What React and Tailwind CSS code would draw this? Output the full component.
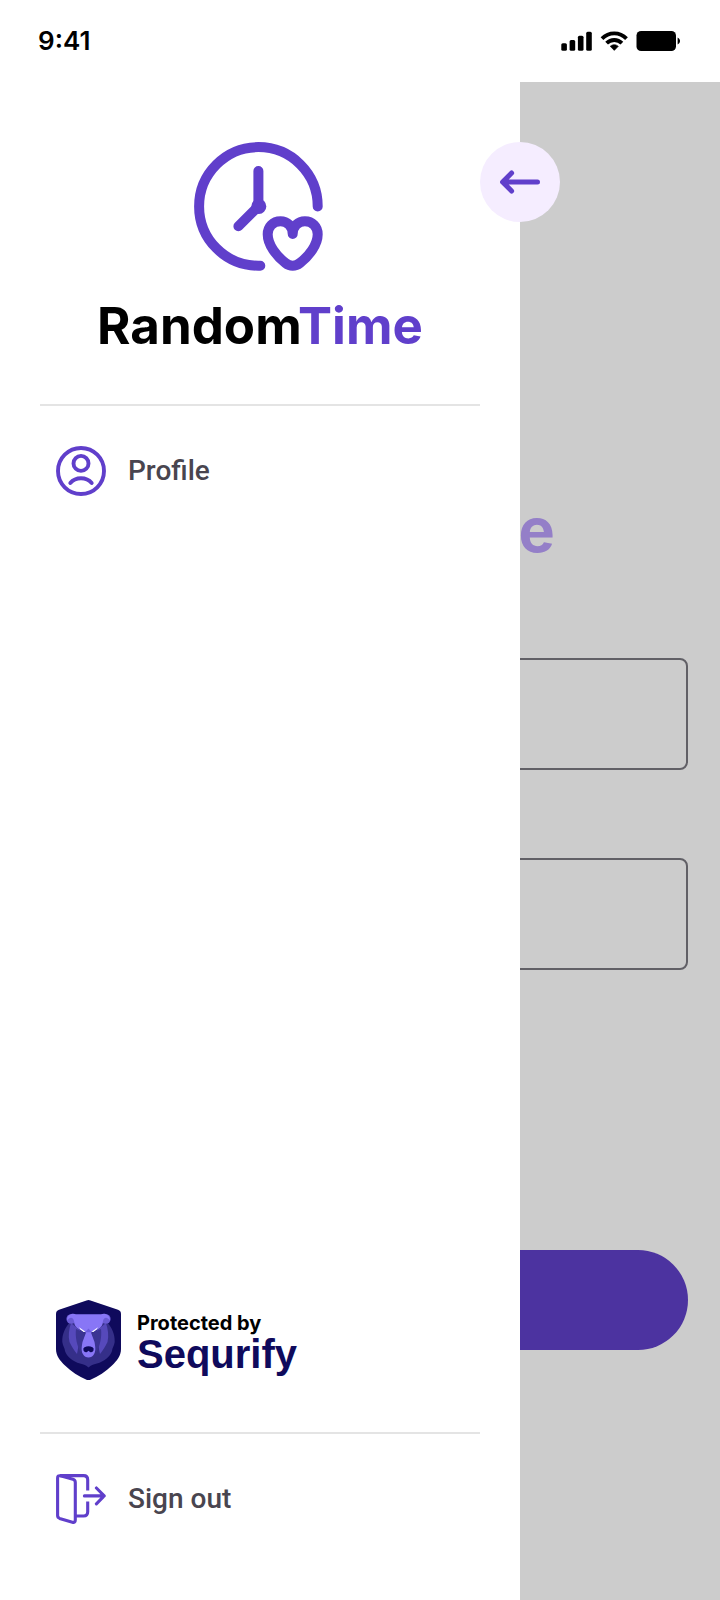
function StatusIcons() {
  return (
    <div className="flex items-center gap-2">
      <svg className="h-5 w-8" viewBox="0 0 32 20" fill="currentColor" aria-hidden="true">
        <rect x="1.3" y="12.3" width="5.6" height="7.4" rx="1.5" />
        <rect x="9.6" y="9" width="5.6" height="10.7" rx="1.5" />
        <rect x="17.9" y="4.8" width="5.6" height="14.9" rx="1.5" />
        <rect x="26.2" y="0.8" width="5.6" height="18.9" rx="1.5" />
      </svg>
      <svg className="h-5 w-7" viewBox="0 0 28 20" aria-hidden="true">
        <g fill="none" stroke="currentColor" strokeWidth="3.8">
          <path d="M2 7.6 C8.8 0.5 19.7 0.5 26.5 7.6" />
          <path d="M6.6 12.2 C10.8 7.9 17.7 7.9 21.9 12.2" />
        </g>
        <path
          d="M14.3 19.4 L10.2 15.3 C12.5 13.2 16 13.2 18.3 15.3 Z"
          fill="currentColor"
          stroke="currentColor"
          strokeWidth="0.6"
        />
      </svg>
      <svg className="h-5 w-11" viewBox="0 0 44 20" fill="currentColor" aria-hidden="true">
        <rect x="0.5" y="0" width="39.5" height="20" rx="4.6" />
        <path d="M41.6 6.5 C44.8 8 44.8 12 41.6 13.5 Z" />
      </svg>
    </div>
  );
}

function ClockHeartLogo() {
  return (
    <svg
      className="mr-1 size-[129px]"
      viewBox="0 0 129 129"
      fill="none"
      stroke="currentColor"
      strokeWidth="10"
      strokeLinecap="round"
      strokeLinejoin="round"
      aria-hidden="true"
    >
      <path d="M123.7 64.4 A59.3 59.3 0 1 0 64.4 123.7 H66.3" />
      <path d="M64.4 29 V64.4 L44.4 84.2" />
      <circle cx="64.8" cy="64.4" r="7.5" fill="currentColor" stroke="none" />
      <path d="M98.7 92 C98.7 84 93 79.3 86.5 79.3 C79 79.3 73.7 84.8 73.7 92.3 C73.7 103 82.5 114 91.5 121 C96 124.6 101.4 124.6 105.9 121 C115 114 123.7 103 123.7 92.3 C123.7 84.8 118.4 79.3 110.9 79.3 C104.4 79.3 98.7 84 98.7 92 Z" />
    </svg>
  );
}

function ArrowLeftIcon() {
  return (
    <svg
      className="h-6 w-10"
      viewBox="0 0 40 24"
      fill="none"
      stroke="currentColor"
      strokeWidth="5"
      strokeLinecap="round"
      strokeLinejoin="round"
      aria-hidden="true"
    >
      <path d="M37.5 12 H3.5 M11.6 3 L2.6 12 L11.6 21" />
      <path d="M2.6 12 L8 7 V17 Z" fill="currentColor" stroke="none" />
    </svg>
  );
}

function ProfileIcon() {
  return (
    <svg
      className="size-[50px] shrink-0"
      viewBox="0 0 50 50"
      fill="none"
      stroke="currentColor"
      strokeWidth="3.9"
      strokeLinecap="round"
      aria-hidden="true"
    >
      <circle cx="25" cy="25" r="23" />
      <circle cx="25" cy="17.4" r="7.5" />
      <path d="M14.3 37 C19.6 30.6 30.4 30.6 35.7 37" />
    </svg>
  );
}

function SignOutIcon() {
  return (
    <svg
      className="size-[50px] shrink-0"
      viewBox="0 0 50 50"
      fill="none"
      stroke="currentColor"
      strokeWidth="3.1"
      strokeLinecap="round"
      strokeLinejoin="round"
      aria-hidden="true"
    >
      <path d="M4.4 1.8 L17 5.3 Q19.3 6 19.3 8.4 V46 Q19.3 49 16.4 48.2 L3.6 44.4 Q1.6 43.7 1.6 41.6 V4 Q1.6 1.2 4.4 1.8 Z" />
      <path d="M4 1.6 H27.6 Q31.7 1.6 31.7 5.7 V16.4" strokeLinecap="butt" />
      <path d="M31.7 27.4 V37.8 Q31.7 42 27.6 42 H20" strokeLinecap="butt" />
      <path d="M28.4 21.9 H48 M40.4 14 L48.2 21.9 L40.4 29.8" />
    </svg>
  );
}

function BearShield() {
  return (
    <svg className="h-20 w-[65px] shrink-0" viewBox="0 0 65 80" aria-hidden="true">
      <path
        fill="#0f0a5c"
        d="M30.5 0.5 Q32.5 -0.3 34.5 0.5 L62 9.8 Q65 10.8 65 14 V49 C65 56 61 60.5 56 65.5 C50 71.5 42 76.5 34.5 79.7 Q32.5 80.5 30.5 79.7 C23 76.5 15 71.5 9 65.5 C4 60.5 0 56 0 49 V14 Q0 10.8 3 9.8 Z"
      />
      <path
        fill="#352f89"
        d="M14 22 C9 28 6 34 6.3 42 C6.8 46 9 48 9 51 C11 57 17 61.5 24 63.5 C28 64.5 30 65 32.5 67.5 C35 65 37 64.5 41 63.5 C48 61.5 54 57 56 51 C56 48 58.2 46 58.7 42 C59 34 56 28 51 22 Z"
      />
      <path
        fill="#5649bb"
        d="M15 23 C13 29 12 36 13.5 42 C16 47 18 50 21 54 C23 46 22 40 27 33 Z M50 23 C52 29 53 36 51.5 42 C49 47 47 50 44 54 C42 46 43 40 38 33 Z"
      />
      <path fill="#3b3493" d="M20 29 C19 37 21 46 25 53 L29 33 Z M45 29 C46 37 44 46 40 53 L36 33 Z" />
      <circle cx="15.2" cy="19" r="4.8" fill="#6a5bd4" />
      <circle cx="49.8" cy="19" r="4.8" fill="#6a5bd4" />
      <path
        fill="#8876f6"
        d="M11.2 20.5 C10.5 15 16 12.5 20 14.2 H45 C49 12.5 54.5 15 53.8 20.5 C51 16 47.5 17.5 47 21 C47 25 45 27.5 42 29.2 L35 32.5 L38.5 42 C39.5 48 40 51 37.8 54.5 C36 58.5 29 58.5 27.2 54.5 C25 51 25.5 48 26.5 42 L30 32.5 L23 29.2 C20 27.5 18 25 18 21 C17.5 17.5 14 16 11.2 20.5 Z"
      />
      <path fill="#6c5cdd" d="M32.5 28.5 L36 32.3 H29 Z" />
      <path fill="#ffffff" d="M23 27.2 L29.5 31.7 L27.6 32 L24.4 29.6 Z M42 27.2 L35.5 31.7 L37.4 32 L40.6 29.6 Z" />
      <path
        fill="#0f0a5c"
        d="M28.5 47.2 Q32.5 45.5 36.5 47.2 Q38.3 48.2 37.5 50.5 Q36.5 52.8 34 52 L32.5 50.8 L31 52 Q28.5 52.8 27.5 50.5 Q26.7 48.2 28.5 47.2 Z"
      />
    </svg>
  );
}

function Wordmark({ className, accent }) {
  return (
    <span className={className}>
      Random<span className={accent}>Time</span>
    </span>
  );
}

function SignInPage() {
  return (
    <main className="col-start-1 row-start-1 flex flex-col px-8 pt-[412px]">
      <h1 className="text-center">
        <Wordmark className="text-[61px] leading-[72px] font-bold" accent="text-[#b99ffa]" />
      </h1>
      <input
        type="email"
        aria-label="Email"
        className="mt-[92px] h-28 w-full rounded-lg border-2 border-[#7a7880] bg-transparent px-8 text-[28px]"
      />
      <input
        type="password"
        aria-label="Password"
        className="mt-[88px] h-28 w-full rounded-lg border-2 border-[#7a7880] bg-transparent px-8 text-[28px]"
      />
      <button type="button" aria-label="Sign in" className="mt-[280px] h-[100px] w-full rounded-full bg-[#6040c8]" />
    </main>
  );
}

function Drawer() {
  return (
    <aside className="relative z-10 col-start-1 row-start-1 flex w-[520px] flex-col bg-white px-10 pt-[60px] pb-[76px]">
      <button
        type="button"
        aria-label="Close menu"
        className="absolute top-[60px] -right-10 flex size-20 items-center justify-center rounded-full bg-[#f5edff] text-[#603fcb]"
      >
        <ArrowLeftIcon />
      </button>

      <div className="flex flex-col items-center gap-6 border-b-2 border-[#e4e4e4] pb-12 text-[#603fcb]">
        <ClockHeartLogo />
        <Wordmark className="text-[51px] leading-[61px] font-bold text-black" accent="text-[#603fcb]" />
      </div>

      <nav className="flex grow flex-col px-4 pt-10">
        <a href="#profile" className="flex items-center gap-[22px] text-[#603fcb]">
          <ProfileIcon />
          <span className="font-[Roboto,sans-serif] text-[28px] leading-8 font-medium text-[#49454f]">Profile</span>
        </a>
      </nav>

      <div className="flex items-center gap-4 border-b-2 border-[#e4e4e4] px-4 pb-[52px]">
        <BearShield />
        <div className="flex flex-col pt-1">
          <span className="text-[20px] leading-6 font-bold text-black">Protected by</span>
          <span className="font-['Liberation_Sans',sans-serif] text-[40px] leading-[38px] font-bold text-[#0f0a5c]">
            Sequrify
          </span>
        </div>
      </div>

      <a href="#sign-out" className="mt-10 flex items-center gap-[22px] px-4 text-[#603fcb]">
        <SignOutIcon />
        <span className="font-[Roboto,sans-serif] text-[28px] leading-8 font-medium text-[#49454f]">Sign out</span>
      </a>
    </aside>
  );
}

export default function App() {
  return (
    <div className="flex min-h-screen flex-col bg-white font-[Inter,sans-serif] text-black">
      <header className="flex h-[82px] items-center justify-between pr-10 pl-[38px]">
        <time className="text-[26px] leading-8 font-semibold">9:41</time>
        <StatusIcons />
      </header>
      <div className="grid grow grid-cols-1 overflow-hidden">
        <SignInPage />
        <div className="col-start-1 row-start-1 bg-black/20" />
        <Drawer />
      </div>
    </div>
  );
}
